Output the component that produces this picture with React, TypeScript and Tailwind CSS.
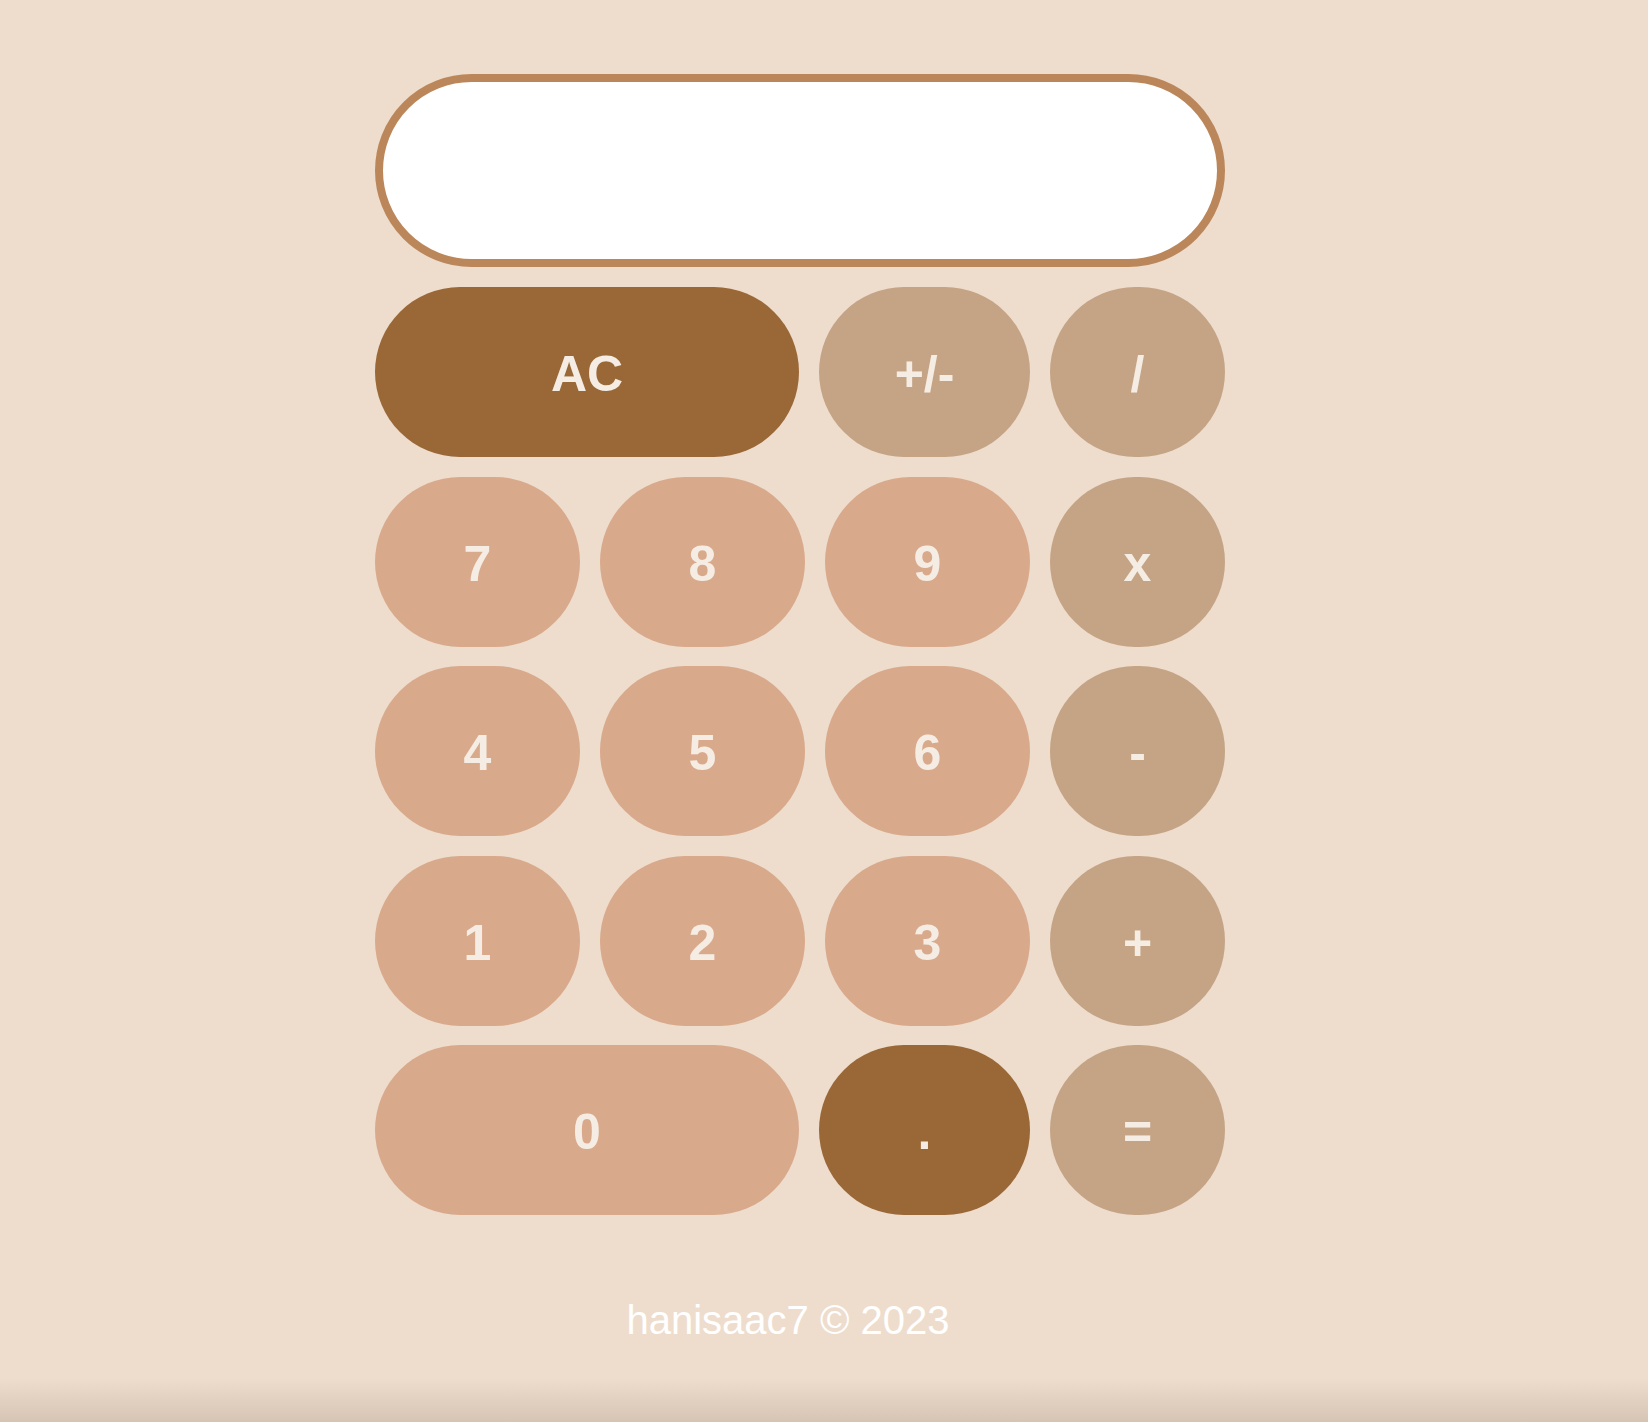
type Key = {
	label: string;
	width: string;
	tone: "digit" | "op" | "dark";
};

const rows: Key[][] = [
	[
		{ label: "AC", width: "w-[424px]", tone: "dark" },
		{ label: "+/-", width: "w-[211px]", tone: "op" },
		{ label: "/", width: "w-[175px]", tone: "op" },
	],
	[
		{ label: "7", width: "w-[205px]", tone: "digit" },
		{ label: "8", width: "w-[205px]", tone: "digit" },
		{ label: "9", width: "w-[205px]", tone: "digit" },
		{ label: "x", width: "w-[175px]", tone: "op" },
	],
	[
		{ label: "4", width: "w-[205px]", tone: "digit" },
		{ label: "5", width: "w-[205px]", tone: "digit" },
		{ label: "6", width: "w-[205px]", tone: "digit" },
		{ label: "-", width: "w-[175px]", tone: "op" },
	],
	[
		{ label: "1", width: "w-[205px]", tone: "digit" },
		{ label: "2", width: "w-[205px]", tone: "digit" },
		{ label: "3", width: "w-[205px]", tone: "digit" },
		{ label: "+", width: "w-[175px]", tone: "op" },
	],
	[
		{ label: "0", width: "w-[424px]", tone: "digit" },
		{ label: ".", width: "w-[211px]", tone: "dark" },
		{ label: "=", width: "w-[175px]", tone: "op" },
	],
];

const toneClass = {
	digit: "bg-[#D9A98C]",
	op: "bg-[#C5A486]",
	dark: "bg-[#9A6736]",
};

function CalcButton({ label, width, tone }: Key) {
	return (
		<button
			className={`${width} ${toneClass[tone]} h-[170px] pt-[4px] rounded-full flex items-center justify-center text-[50px] font-bold leading-none text-[#F5EDE3]`}
		>
			{label}
		</button>
	);
}

export default function App() {
	return (
		<div
			className="min-h-[1422px] bg-[linear-gradient(to_bottom,#EEDDCD_0px,#EEDDCD_1378px,#D6C5B4_1422px)] pt-[74px]"
			style={{ fontFamily: '"Liberation Sans", Arial, Helvetica, sans-serif' }}
		>
			<div className="flex justify-center pr-[48px]">
				<div className="w-[850px] flex flex-col gap-[19.5px]">
					<div className="h-[193px] mb-[0.5px] rounded-full border-8 border-[#BB875A] bg-white" />
					{rows.map((row, i) => (
						<div key={i} className="flex gap-[20px]">
							{row.map((k) => (
								<CalcButton key={k.label} {...k} />
							))}
						</div>
					))}
				</div>
			</div>
			<footer className="flex justify-center pr-[72px] mt-[85px]">
				<p className="text-[40px] leading-none text-white">hanisaac7 © 2023</p>
			</footer>
		</div>
	);
}
